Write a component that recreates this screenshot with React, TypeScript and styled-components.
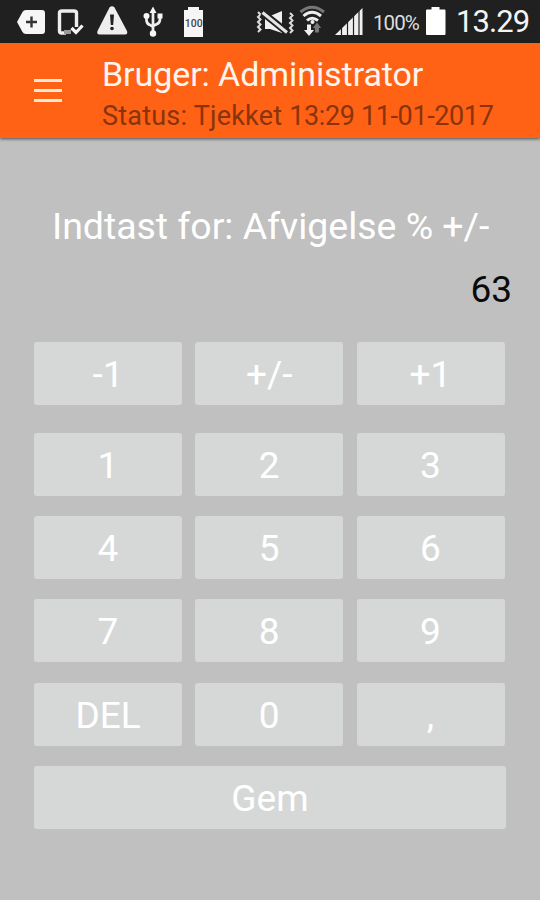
import React from 'react';
import styled, { createGlobalStyle } from 'styled-components';

const GlobalStyle = createGlobalStyle`
  * { box-sizing: border-box; }
  body { margin: 0; background: #c0c0c0; font-family: Roboto, "Liberation Sans", sans-serif; }
`;

const Screen = styled.div`
  width: 540px;
  height: 900px;
  display: flex;
  flex-direction: column;
  background: #c0c0c0;
  overflow: hidden;
`;

const StatusBar = styled.header`
  height: 43px;
  flex: none;
  display: flex;
  justify-content: space-between;
  background: #202020;
`;

const IconStrip = styled.svg`
  display: block;
  height: 43px;
  flex: none;
`;

const StatusRight = styled.div`
  display: flex;
  height: 43px;
  padding-right: 10px;
  color: #f4f4f4;
  white-space: nowrap;
`;

const Percent = styled.span`
  width: 51px;
  font-size: 20.5px;
  line-height: 46px;
  letter-spacing: -0.9px;
  color: #dedede;
`;

const Clock = styled.time`
  margin-left: 10px;
  width: 74px;
  font-size: 31px;
  line-height: 43px;
  letter-spacing: -0.9px;
`;

const AppBar = styled.div`
  height: 95px;
  flex: none;
  display: flex;
  background: #ff6115;
  box-shadow: 0 1px 3px rgba(0, 0, 0, 0.6);
`;

const MenuButton = styled.button`
  width: 102px;
  height: 95px;
  padding: 36px 0 0 34px;
  border: 0;
  background: none;
  display: flex;
  flex-direction: column;
  gap: 7px;
`;

const MenuLine = styled.span`
  width: 28px;
  height: 3px;
  background: #ffe6d8;
`;

const Titles = styled.div`
  display: flex;
  flex-direction: column;
  white-space: nowrap;
`;

const Title = styled.h1`
  margin: 0;
  padding-top: 10px;
  font-size: 34px;
  font-weight: 400;
  line-height: 42px;
  letter-spacing: -0.08px;
  color: #fff5ee;
`;

const Subtitle = styled.p`
  margin: 0;
  padding-top: 1px;
  font-size: 27px;
  line-height: 41px;
  letter-spacing: 0.22px;
  color: #8a340c;
`;

const Timestamp = styled.time`
  letter-spacing: -0.38px;
`;

const Prompt = styled.h2`
  margin: 0;
  padding: 62px 0 0 52px;
  font-size: 37.5px;
  font-weight: 400;
  line-height: 53px;
  letter-spacing: -0.04px;
  color: #fff;
  white-space: nowrap;
`;

const Value = styled.output`
  display: block;
  padding: 11px 28px 0 0;
  text-align: right;
  font-size: 37px;
  line-height: 52px;
  color: #0a0a0a;
`;

const Keypad = styled.main`
  padding: 26.4px 34px 0;
  display: flex;
  flex-direction: column;
  gap: 20.3px;
`;

const KeyRow = styled.div<{ $spaced?: boolean }>`
  display: grid;
  grid-template-columns: repeat(3, 148px);
  gap: 13.25px;
  margin-bottom: ${(p) => (p.$spaced ? 7 : 0)}px;
`;

const Key = styled.button`
  height: 63px;
  padding: 3px 0 0;
  border: 0;
  border-radius: 3px;
  background: #d6d8d7;
  color: #fff;
  font: 400 37px/60px Roboto, "Liberation Sans", sans-serif;
`;

const rows = [
  ['-1', '+/-', '+1'],
  ['1', '2', '3'],
  ['4', '5', '6'],
  ['7', '8', '9'],
  ['DEL', '0', ','],
];

const NotificationIcons = () => (
  <IconStrip width="220" viewBox="0 0 220 43" fill="#f6f6f6">
    <path d="M17 22 22.5 12Q23.5 10 26 10H42Q45 10 45 13V31Q45 34 42 34H26Q23.5 34 22.5 32Z" />
    <path d="M26 22H37M31.5 16.5V27.5" stroke="#333" strokeWidth="2.4" />
    <path d="M66 33H61.5Q59.5 33 59.5 31V13Q59.5 11 62 11H74Q76.5 11 76.5 13V27" fill="none" stroke="#eee" strokeWidth="3.4" />
    <path d="M64 32H71" stroke="#999" strokeWidth="4" />
    <path d="M71.5 28 76 32.5 82.5 25.5" fill="none" stroke="#f6f6f6" strokeWidth="3.2" />
    <path d="M109.5 7.5Q112 5 114.5 7.5L127 31Q128 34.5 125 34.5H99.500Q96.500 34.500 97.500 31Z" fill="#eee" />
    <path d="M110 14.500H114L113.200 25H110.800Z" fill="#222" />
    <circle cx="112" cy="28.500" r="1.800" fill="#222" />
    <path d="M153 12V33M146.500 17V20Q146.500 24 150 25L153 27M160 17V19Q160 23 157 24L153 26" fill="none" stroke="#eee" strokeWidth="2.700" />
    <path d="M153 6.500 156.500 13H149.500ZM157.500 13.500H162.500V18.500H157.500Z" />
    <circle cx="146.500" cy="16" r="3" />
    <circle cx="153" cy="33.500" r="3.200" />
    <path d="M188 7H199V10H203V37H184V10H188Z" />
    <text x="193.700" y="27" fontFamily="Roboto" fontSize="10.500" fontWeight="500" textAnchor="middle" fill="#444">100</text>
  </IconStrip>
);

const SignalIcons = () => (
  <IconStrip width="120" viewBox="252 0 120 43" fill="#f0f0f0">
    <path d="M264 16H269L281 11V33L269 29H264Z" />
    <path d="M257 12 259.500 14.500 257 17 259.500 19.500 257 22 259.500 24.500 257 27 259.500 29.500 257 32M289 13 291.500 15.500 289 18 291.500 20.500 289 23 291.500 25.500 289 28 291.500 30.500 289 33" fill="none" stroke="#ddd" strokeWidth="2" />
    <path d="M261.500 12.500 287 33" stroke="#202020" strokeWidth="7" />
    <path d="M261.500 12.500 286 32.500" stroke="#e6e6e6" strokeWidth="3" />
    <path d="M299.500 12Q311 2.500 323 12" fill="none" stroke="#777" strokeWidth="3" />
    <path d="M302.500 16Q311 8.500 320 16M306 20.500Q311 16 317 20.500" fill="none" stroke="#eee" strokeWidth="3" />
    <circle cx="311.500" cy="22" r="2" />
    <path d="M306 24.500H310V30H313L308 36 303 30H306Z" />
    <path d="M314 32.500V28H311.800L316 22.500 320.200 28H318V32.500Z" fill="#777" />
    <path d="M334 35 361.500 8V35Z" />
    <path d="M340.500 25V36M346.500 18V36M352.500 14V36M358 9V36" stroke="#202020" strokeWidth="1.200" />
  </IconStrip>
);

const BatteryIcon = () => (
  <IconStrip width="22" viewBox="0 0 22 43">
    <path d="M7.500 7H15.500V9.500H20.500Q21.500 9.500 21.500 10.500V34Q21.500 35 20.500 35H3Q2 35 2 34V10.500Q2 9.500 3 9.500H7.500Z" fill="#fff" />
  </IconStrip>
);

export default function App() {
  return (
    <>
      <GlobalStyle />
      <Screen>
        <StatusBar>
          <NotificationIcons />
          <StatusRight>
            <SignalIcons />
            <Percent>100%</Percent>
            <BatteryIcon />
            <Clock>13.29</Clock>
          </StatusRight>
        </StatusBar>
        <AppBar>
          <MenuButton aria-label="Menu">
            <MenuLine />
            <MenuLine />
            <MenuLine />
          </MenuButton>
          <Titles>
            <Title>Bruger: Administrator</Title>
            <Subtitle>
              Status: Tjekket <Timestamp>13:29 11-01-2017</Timestamp>
            </Subtitle>
          </Titles>
        </AppBar>
        <Prompt>Indtast for: Afvigelse % +/-</Prompt>
        <Value>63</Value>
        <Keypad>
          {rows.map((row, index) => (
            <KeyRow key={row[0]} $spaced={index === 0}>
              {row.map((label) => (
                <Key key={label}>{label}</Key>
              ))}
            </KeyRow>
          ))}
          <Key>Gem</Key>
        </Keypad>
      </Screen>
    </>
  );
}
